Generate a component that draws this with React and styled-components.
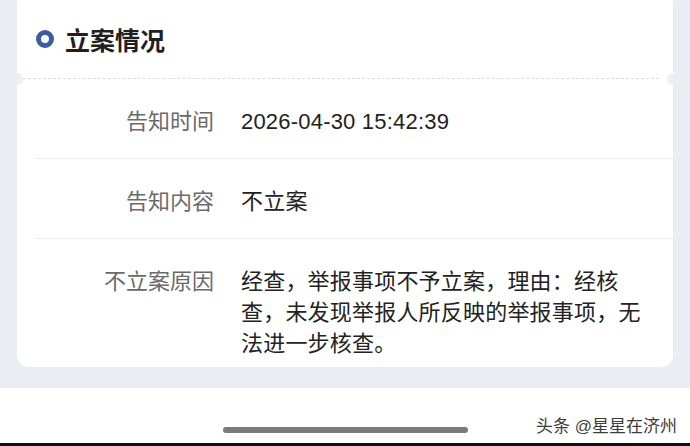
import styled, { createGlobalStyle } from 'styled-components';

const GlobalStyle = createGlobalStyle`
  html, body {
    margin: 0;
    padding: 0;
    background: #eaedf2;
  }
  body {
    font-family: "Liberation Sans", "Noto Sans CJK SC", sans-serif;
  }
`;

const Page = styled.div`
  width: 690px;
  height: 446px;
  display: flex;
  flex-direction: column;
  overflow: hidden;
`;

const Main = styled.main`
  flex: 1;
  padding: 0 17px;
  background: #eaedf2;
`;

const Ticket = styled.section`
  position: relative;
  margin-top: -8px;
  background: #fff;
  border-radius: 12px;
  overflow: hidden;
`;

const Notch = styled.span`
  position: absolute;
  top: 81px;
  ${({ $side }) => ($side === 'left' ? 'left: -6px;' : 'right: -6px;')}
  width: 12px;
  height: 12px;
  border-radius: 50%;
  background: #eef0f4;
`;

const Header = styled.header`
  height: 78px;
  padding: 8px 0 0 19px;
  display: flex;
  align-items: center;
  gap: 11px;
`;

const Ring = styled.span`
  width: 18px;
  height: 18px;
  box-sizing: border-box;
  border: 5px solid #3d5b9f;
  border-radius: 50%;
`;

const Title = styled.h2`
  margin: 0;
  font-size: 25px;
  font-weight: 700;
  color: #1f1f1f;
  font-family: "Noto Sans CJK SC", sans-serif;
`;

const Divider = styled.div`
  margin: 0 14px 0 6px;
  border-top: 1px dashed #dedede;
`;

const Body = styled.div`
  padding-left: 18px;
`;

const Row = styled.div`
  display: flex;
  align-items: flex-start;
  gap: 27px;
  padding: 27px 0 ${({ $last }) => ($last ? '8px' : '21px')};
  border-bottom: ${({ $last }) => ($last ? 'none' : '1px solid #ededed')};
`;

const Label = styled.div`
  width: 179px;
  flex: none;
  text-align: right;
  font-size: 22px;
  line-height: 31px;
  color: #6a6a6a;
`;

const Value = styled.div`
  width: 405px;
  font-size: 22px;
  line-height: 31px;
  letter-spacing: 0.2px;
  color: #222;
`;

const Footer = styled.footer`
  position: relative;
  height: 55px;
  background: #fff;
  display: flex;
  justify-content: center;
  align-items: flex-end;
  padding-bottom: 10px;
  box-sizing: border-box;
`;

const HomeBar = styled.div`
  width: 245px;
  height: 6px;
  border-radius: 3px;
  background: #7b7b7b;
`;

const Watermark = styled.span`
  position: absolute;
  right: 13px;
  top: 29px;
  font-size: 17px;
  line-height: 20px;
  color: #3c3c3c;
  text-shadow: 0 0 2px #fff;
`;

const BottomEdge = styled.div`
  height: 3px;
  background: #111;
`;

const rows = [
  { label: '告知时间', value: '2026-04-30 15:42:39' },
  { label: '告知内容', value: '不立案' },
  {
    label: '不立案原因',
    value: '经查，举报事项不予立案，理由：经核查，未发现举报人所反映的举报事项，无法进一步核查。',
  },
];

const App = () => {
  return (
    <Page>
      <GlobalStyle />
      <Main>
        <Ticket>
          <Header>
            <Ring />
            <Title>立案情况</Title>
          </Header>
          <Divider />
          <Notch $side="left" />
          <Notch $side="right" />
          <Body>
            {rows.map((r, i) => (
              <Row key={r.label} $last={i === rows.length - 1}>
                <Label>{r.label}</Label>
                <Value>{r.value}</Value>
              </Row>
            ))}
          </Body>
        </Ticket>
      </Main>
      <Footer>
        <HomeBar />
        <Watermark>头条 @星星在济州</Watermark>
      </Footer>
      <BottomEdge />
    </Page>
  );
};

export default App;
